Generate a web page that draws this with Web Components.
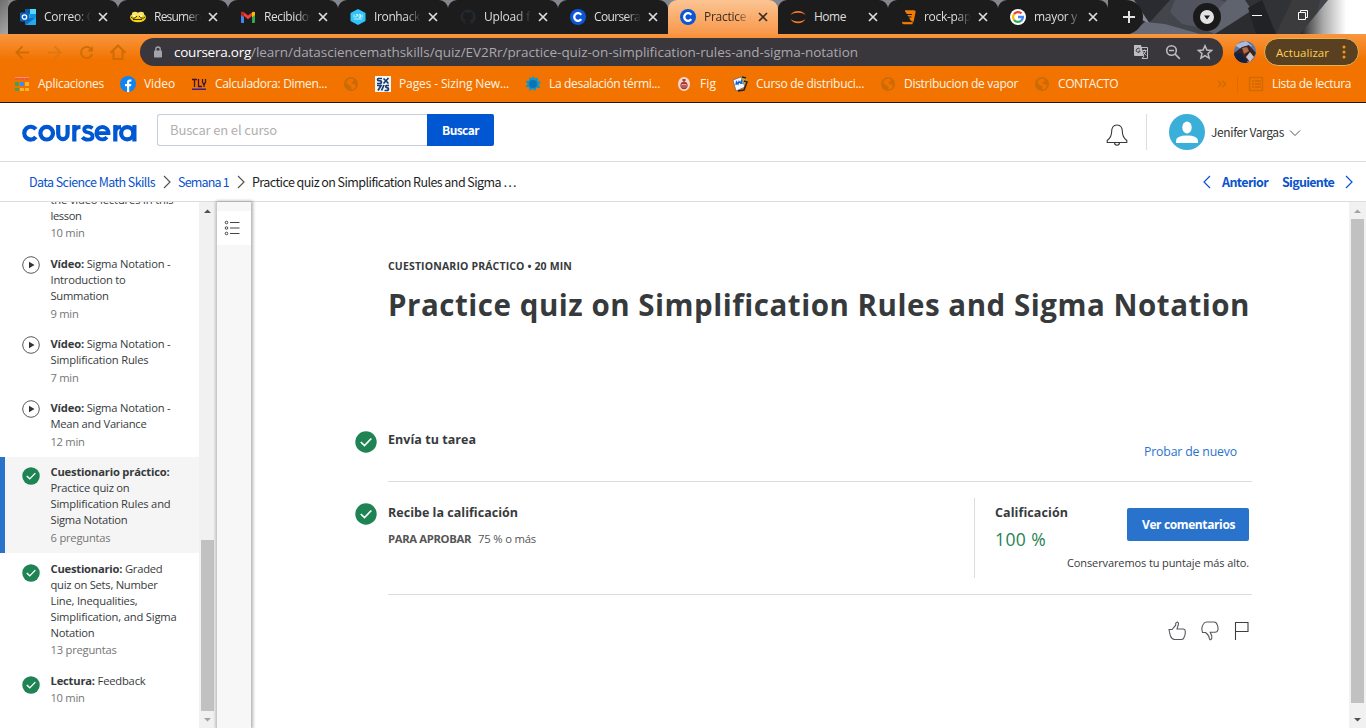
<!DOCTYPE html>
<html lang="es">
<head>
<meta charset="utf-8">
<title>Practice quiz | Coursera</title>
<style>
html,body{margin:0;height:100%;overflow:hidden;background:#fff}
</style>
</head>
<body>
<app-shell></app-shell>
<script>
// Base class: renders the markup returned by view() into an open shadow root.
class Base extends HTMLElement {
  constructor(){ super(); this.attachShadow({mode:'open'}); }
  connectedCallback(){ this.shadowRoot.innerHTML = '<style>*{box-sizing:border-box}:host{display:block;box-sizing:border-box}</style>' + this.view(); }
  a(n){ return this.getAttribute(n) || ''; }
}

// Text run with a given advance width, reached with letter spacing.
class FitText extends HTMLElement {
  constructor(){
    super();
    this.attachShadow({mode:'open'}).innerHTML = '<style>:host{display:block;width:max-content;flex:none;white-space:nowrap}</style><slot></slot>';
  }
  connectedCallback(){
    const w = +this.getAttribute('w');
    if(!w) return;
    const nat = this.getBoundingClientRect().width;
    this.style.letterSpacing = ((w - nat) / this.textContent.length).toFixed(3) + 'px';
  }
}

const globe = '<circle cx="8" cy="8" r="7" fill="#c96b06"/><path d="M3 6 6 3l4-.4L11 5 8.500 6.500 9 8l3 .5 1 2-3 3-2-.5.5-2.500L5.500 9Z" fill="#f27200"/>';
const cLogo = '<circle cx="8" cy="8" r="8" fill="#0b56d6"/><path d="M11.200 5.900A3.800 3.800 0 1 0 11.200 10.100" fill="none" stroke="#fff" stroke-width="2.300"/>';
const ICONS = {
  outlook:[16,16,'<rect x="5" y="0" width="11" height="14" rx="1" fill="#28a8ea"/><path d="M5 0h5v5H5z" fill="#0c59a4"/><path d="M10 0h6v5h-6z" fill="#50d9ff"/><path d="M10 5h6v5h-6z" fill="#1490df"/><path d="M5 9 16 9v6a1 1 0 0 1-1 1H5z" fill="#1172c4"/><path d="M16 8.500 6 16h9a1 1 0 0 0 1-1z" fill="#28a8ea"/><rect y="3.500" width="9" height="9" rx="1" fill="#0a64bd"/><circle cx="4.500" cy="8" r="2.200" fill="none" stroke="#fff" stroke-width="1.300"/>'],
  bee:[16,16,'<ellipse cx="8" cy="8.500" rx="8" ry="4.800" fill="#f6d312"/><ellipse cx="5" cy="5" rx="3" ry="2.200" fill="#fbe66a"/><ellipse cx="11" cy="5" rx="3" ry="2.200" fill="#fbe66a"/><path d="M1 8q3 3 6-1M9 7q3 4 6 1M3 10.500h9" stroke="#38340a" stroke-width="1" fill="none"/><circle cx="4" cy="7" r="1" fill="#fff"/><circle cx="11" cy="7" r="1" fill="#fff"/>'],
  gmail:[16,16,'<path d="M1 3h3v11H1.500Q1 14 1 13z" fill="#4285f4"/><path d="M12 3h3v10q0 1-.6 1H12z" fill="#34a853"/><path d="M1 4.500Q1 2 3.500 3L8 6.600 12.500 3Q15 2 15 4.500L8 10.200Z" fill="#ea4335"/><path d="M12 3.400Q15 1.600 15 4.500V6l-3 2.300z" fill="#fbbc04"/><path d="M1 4.500V6l3 2.300V3.400Q1 1.600 1 4.500" fill="#c5221f"/>'],
  iron:[16,16,'<path d="M8 0 15.500 4V12L8 16 .5 12V4Z" fill="#2dc5fa"/><path d="M4 5.500v3M6 5.500h1.500v1.500H6v1.500M9 5.500h1.500v3H9zM12 8.500v-3M4 10h8" stroke="#d7f4ff" stroke-width=".9" fill="none"/>'],
  github:[16,16,'<path d="M8 .5a7.500 7.500 0 0 0-2.400 14.600v-2.200c-2 .4-2.700-1-3.200-2 1.200.2 1.300 1.300 2.800 1.100.1-.5.300-.8.600-1.100C3.500 10.400 3 8.800 3 7.300c0-.9.300-1.700.8-2.200-.2-.8-.1-1.500.1-2.100 1 0 1.700.5 2.100.8a8 8 0 0 1 4 0c.4-.3 1.200-.8 2.100-.8.300.7.300 1.300.1 2.100.5.600.8 1.300.8 2.200 0 1.500-.6 3.100-2.900 3.600.5.500.6 1 .6 1.800v2.400A7.500 7.500 0 0 0 8 .5Z" fill="#24292e"/>'],
  coursera:[16,16,cLogo],
  jupyter:[16,16,'<path d="M.5 6.200C3 .6 13 .6 15.500 6.200 12 3 4 3 .5 6.200ZM.5 10C4 13.200 12 13.200 15.500 10 13 15.600 3 15.600.5 10Z" fill="#f37726"/>'],
  book:[16,16,'<path d="M5 2h9q1 0 .8 1L13 12q-.2 1-1.200 1H3.500q-.8 0-.6.7T4 14.500h8.500" fill="#f57c00" stroke="#f57c00" stroke-width="1.500"/><path d="M6 5.500h6M5.400 8h6M3 12.600h9.500" stroke="#1c1c1c" stroke-width="1"/>'],
  google:[16,16,'<circle cx="8" cy="8" r="8" fill="#fff"/><g fill="none" stroke-width="2.300"><path d="M4 5.200A5 5 0 0 1 11.500 4.400" stroke="#ea4335"/><path d="M4 5.200A5 5 0 0 0 4 10.800" stroke="#fbbc05"/><path d="M4 10.800A5 5 0 0 0 11.300 11.700" stroke="#34a853"/><path d="M11.300 11.700A5 5 0 0 0 12.900 8H8" stroke="#4285f4"/></g>'],
  x:[10,10,'<path d="M1 1 9 9M9 1 1 9" stroke="currentColor" stroke-width="1.700"/>'],
  plus:[12,12,'<path d="M6 0V12M0 6H12" stroke="#e4e4e4" stroke-width="2"/>'],
  down:[28,28,'<circle cx="14" cy="14" r="14" fill="#1a1a1a"/><circle cx="14" cy="14" r="7" fill="#e3e3e3"/><path d="M11 12.500h6L14 16.500Z" fill="#1a1a1a"/>'],
  min:[12,12,'<path d="M1 6.500H11" stroke="#fff"/>'],
  restore:[12,12,'<path d="M1.500 3.500h7v7h-7zM3.500 3.500v-2h7v7h-2" fill="none" stroke="#fff"/>'],
  back:[16,16,'<path d="M15 8H2M8 1.500 1.500 8 8 14.500" fill="none" stroke="#cf6d05" stroke-width="2"/>'],
  fwd:[16,16,'<path d="M1 8H14M8 1.500 14.500 8 8 14.500" fill="none" stroke="#dc7812" stroke-width="1.800"/>'],
  reload:[16,16,'<path d="M12.700 4A6 6 0 1 0 14 9.500" fill="none" stroke="#cf6d05" stroke-width="2"/><path d="M14.800 1v6h-6z" fill="#cf6d05"/>'],
  home:[16,16,'<path d="M.5 9 8 1.500 15.500 9M3.500 7v8h9V7" fill="none" stroke="#cf6d05" stroke-width="2"/>'],
  lock:[10,12,'<rect x="1" y="4.500" width="8" height="7" rx=".8" fill="#a4a3a7"/><path d="M2.800 5V3.200a2.200 2.200 0 0 1 4.400 0V5" fill="none" stroke="#a4a3a7" stroke-width="1.300"/>'],
  trans:[16,16,'<path d="M1 1h7l3 11H2q-1 0-1-1z" fill="#bdbcc0"/><path d="M7.700 3.500H14.500v11H9l2-2.500" fill="none" stroke="#bdbcc0"/><path d="M6.800 5A2 2 0 1 0 7.200 7H5.500" fill="none" stroke="#39363c"/><path d="M9.500 6.500h4M11.500 5.500v1M13 6.500q-.6 3-3 4.500M10.400 7.500q1 2.500 3 4" fill="none" stroke="#bdbcc0"/>'],
  zoomout:[16,16,'<circle cx="6.500" cy="6.500" r="4.800" fill="none" stroke="#bdbcc0" stroke-width="1.600"/><path d="M4 6.500h5M10 10l4.800 4.800" stroke="#bdbcc0" stroke-width="1.700"/>'],
  star:[16,16,'<path d="M8 1.700 9.900 6l4.700.4-3.600 3.100 1.100 4.600L8 11.700 3.900 14.100 5 9.500 1.400 6.400 6.100 6Z" fill="none" stroke="#bdbcc0" stroke-width="1.500"/>'],
  photo:[22,22,'<defs><clipPath id="c"><circle cx="11" cy="11" r="11"/></clipPath></defs><g clip-path="url(#c)"><path fill="#5d76a8" d="M0 0h22v22H0z"/><path fill="#a9bce0" d="M0 4 12 0l6 5-9 4Z"/><path fill="#3b2420" d="M0 12 8 6l7-2 7 8-5 8H0Z"/><path fill="#b06a4c" d="m8 7 5-1 2 4-5 3Z"/><path fill="#14213f" d="M0 13 7 12 14 22H0Z"/><path fill="#c9c1c5" d="m12 16 4-5 4 5-4 5Z"/></g>'],
  dots:[4,14,'<circle cx="2" cy="2" r="1.500" fill="#f39b13"/><circle cx="2" cy="7" r="1.500" fill="#f39b13"/><circle cx="2" cy="12" r="1.500" fill="#f39b13"/>'],
  apps:[16,16,'<g transform="translate(1 1)"><path d="M0 0h4v3H0zM5 0h4v3H5zM10 0h4v3h-4z" fill="#ee5a3e"/><path d="M0 1h14v-.6H0z" fill="#f9b09a"/><path d="M0 5h4v4H0z" fill="#3ba45a"/><path d="M5 5h4v4H5z" fill="#3c8cf0"/><path d="M10 5h4v4h-4z" fill="#fbb424"/><path d="M0 11h4v3H0z" fill="#3ba45a"/><path d="M5 11h4v3H5zM10 11h4v3h-4z" fill="#fbb424"/></g>'],
  fb:[16,16,'<circle cx="8" cy="8" r="8" fill="#0f85f4"/><path d="M7 16V10.300H5V8h2V6.300Q7 3.300 10 3.400l1.400.1V5.600H10.200Q9.200 5.600 9.200 6.600V8h2.200L11 10.300H9.200V16Z" fill="#fff"/>'],
  tlv:[16,16,'<path d="M1 3.500h5M3.500 3.500V11M7.500 3V10.500H11M11.500 3v3l1 2h1l1-2V3M13 8v3" fill="none" stroke="#3c1330" stroke-width="1.300"/><path d="M1 13.200h14" stroke="#1915a8" stroke-width="1.300"/>'],
  globe:[16,16,globe],
  sx:[16,16,'<path fill="#f4f6f8" d="M0 0h16v16H0z"/><path d="M7 2.500H3.500Q2 3 3 4.500L6 5q1 1.500-.5 2.500H2M8.500 2.500 13.500 7.500M13.500 2 8.500 7.500M2 9.500H6L3 14.500M6.500 14.500 9 9M14 9.500h-2.500q-1.500 1 0 2l1.500.5q1 1.500-.5 2.500H9.500" fill="none" stroke="#17396d" stroke-width="1.700"/>'],
  burst:[16,16,'<path d="m8 0 2 2.500L13 1.500 13 5l3 1-2 2.500L15 12l-3.500-.2L10 15l-2.200-2L4.500 15 4 11.500.5 11 2.500 8 .3 5.300 4 4.500 4.500 1 7 2.500Z" fill="#1694c9"/><circle cx="8" cy="8" r="4" fill="#0c74b4"/>'],
  fig:[16,16,'<ellipse cx="8" cy="8" rx="6" ry="7" fill="#f3d9d0"/><path d="M8 3v3M6.300 4h3.400M5 7.500h6M5.300 10h5.400M6 12h4" stroke="#a8332b" stroke-width="1.300"/><ellipse cx="8" cy="9.500" rx="3.300" ry="3.300" fill="none" stroke="#a8332b"/>'],
  mdoc:[16,16,'<path d="m1 4 8-3 4 10-9 4Z" fill="#f5f7fc" stroke="#35507e" stroke-width=".6"/><path d="m9 1 4 0 2 3-2 6Z" fill="#cba233"/><path d="m10 1 4 1M12 5l3 1-3 8-6 1" stroke="#222" stroke-width="1.500" fill="none"/><path d="m4 9 .5-3 1.500 2 1-2.500 1.500 1.500 1-2 .5 3" stroke="#1461d2" stroke-width="1.400" fill="none"/>'],
  more:[10,8,'<path d="m1 1 3 3-3 3M5.500 1l3 3-3 3" fill="none" stroke="#cb6b04" stroke-width="1.300"/>'],
  list:[16,16,'<rect x="1.500" y="1.500" width="13" height="13" fill="none" stroke="#cb6b04" stroke-width="1.300"/><path d="M4 5h2M7 5h6M4 8h2M7 8h6M4 11h2M7 11h6" stroke="#cb6b04" stroke-width="1.300"/>'],
  bell:[22,24,'<path d="M11 2C7 2 5.600 5 5.600 9c0 5-2.200 6.500-4.400 8.500V19.500H20.800V17.500C18.600 15.500 16.400 14 16.400 9 16.400 5 15 2 11 2ZM8.500 19.500a2.500 2.700 0 0 0 5 0" fill="none" stroke="#373a3c" stroke-width="1.100"/>'],
  user:[36,36,'<circle cx="18" cy="18" r="18" fill="#3bafda"/><ellipse cx="18" cy="13.500" rx="4.700" ry="6" fill="#fff"/><path d="M7 29V27q0-5.500 11-5.500T29 27v2Z" fill="#fff"/>'],
  chevd:[12,8,'<path d="M1 1.500 6 6.500 11 1.500" fill="none" stroke="#555" stroke-width="1"/>'],
  right:[8,14,'<path d="M1 1 7 7 1 13" fill="none" stroke="currentColor" stroke-width="1.200"/>'],
  left:[8,14,'<path d="M7 1 1 7 7 13" fill="none" stroke="currentColor" stroke-width="1.200"/>'],
  play:[18,18,'<circle cx="9" cy="9" r="8.300" fill="#fff" stroke="#555a5e" stroke-width="1"/><path d="M7 5.800 12.500 9 7 12.200Z" fill="#333"/>'],
  check:[22,22,'<circle cx="11" cy="11" r="10.700" fill="#1f8354"/><path d="M5.800 11 9.500 14.500 16.300 7.500" fill="none" stroke="#fff" stroke-width="1.700"/>'],
  menu:[16,16,'<g fill="none" stroke="#444"><circle cx="2.500" cy="2.500" r="1.300"/><circle cx="2.500" cy="8" r="1.300"/><circle cx="2.500" cy="13.500" r="1.300"/><path d="M6 2.500H15.500M6 8H15.500M6 13.500H15.500" stroke-width="1.100"/></g>'],
  up:[18,20,'<path d="M1 8.500H4L7.700 4.200V2.500Q8.200 1 9.300 1 11 1.500 10.200 4L9 8H15.500Q17.500 8.500 17.300 11 17.400 14 16 16.500 15.500 18.500 13.500 18.500H6.500Q3.500 18 2.500 15 1.500 11.500 1 8.500Z" fill="none" stroke="#55585b" stroke-width="1.100"/>'],
  dn:[18,20,'<path d="M1.500 11.500 .8 8Q1 4.500 2.800 2.500 3.800 1 6 1H13Q15.500 1 16.300 4 17.300 6 17 8.500 16.500 11.300 14 11.300H9.200L10.800 15Q11.200 18 9.700 18.700 8.500 19 8.200 17 8.200 14.500 4.500 11.500Z" fill="none" stroke="#55585b" stroke-width="1.100"/>'],
  flag:[16,20,'<path d="M1.500 19V1.500H14V10.500H1.500" fill="none" stroke="#3c4043" stroke-width="1.100"/>'],
};

class UiIcon extends Base {
  view(){
    const [w,h,d] = ICONS[this.a('name')];
    const s = +this.a('size') || w;
    return `<style>:host{flex:none;width:${s}px}svg{display:block}</style><svg width="${s}" height="${h*s/w}" viewBox="0 0 ${w} ${h}">${d}</svg>`;
  }
}

class BrowserTab extends Base {
  view(){
    return `<style>
    :host{width:110px;height:34px;flex:none;position:relative;background:#1c1c1c;border-radius:9px 9px 0 0;color:#dedede;display:flex;align-items:center;padding-left:12px;font:12px/16px "Open Sans",sans-serif}
    :host([active]){background:linear-gradient(#fbc493,#f8984a);color:#3d2c20}
    :host([sep])::after{content:"";position:absolute;right:-1px;top:8px;width:1px;height:19px;background:#5c5c5c}
    .t{width:47px;overflow:hidden;margin-left:8px;-webkit-mask-image:linear-gradient(90deg,#000 68%,transparent);mask-image:linear-gradient(90deg,#000 68%,transparent)}
    :host([full]) .t{-webkit-mask-image:none;mask-image:none}
    .x{margin-left:7px}
    </style><ui-icon name="${this.a('icon')}"></ui-icon><div class="t"><fit-text w="${this.a('w')}">${this.a('label')}</fit-text></div><ui-icon class="x" name="x"></ui-icon>`;
  }
}

class TabStrip extends Base {
  view(){
    const tabs = [['outlook','Correo: C',50,'sep'],['bee','Resumen',47,'sep'],['gmail','Recibidos',50,'sep'],['iron','Ironhack',46,'sep'],['github','Upload f',46,'sep'],['coursera','Coursera',46,''],['coursera','Practice q',52,'active'],['jupyter','Home',32,'full sep'],['book','rock-pap',47,'sep'],['google','mayor y',43,'']];
    return `<style>
    :host{height:34px;display:flex;position:relative;background:#777b83;overflow:hidden}
    .bg{position:absolute;inset:0}
    .run{position:relative;display:flex;margin-left:8px;background:linear-gradient(#83868c 0 7px,#1c1c1c 9px);border-radius:0 0 15px 0;height:34px}
    .run browser-tab[active]{background-clip:padding-box}
    .plus{width:35px;height:28px;margin-top:3px;background:#1c1c1c;border-radius:0 14px 14px 0;display:flex;align-items:center;padding-left:7px;position:relative}
    .ctl{position:relative;flex:1;display:flex;align-items:center}
    .l{background:#1c1c1c;height:34px;display:flex;padding-right:0}
    </style>
    <svg class="bg" width="1366" height="34">
      <defs><linearGradient id="w"><stop offset="0" stop-color="#222"/><stop offset=".35" stop-color="#aaa"/><stop offset=".7" stop-color="#fff"/></linearGradient>
      <linearGradient id="s" x2="1" y2="1"><stop offset="0" stop-color="#6e6e6e"/><stop offset=".6" stop-color="#a5a5a5"/><stop offset="1" stop-color="#222"/></linearGradient></defs>
      <path d="M0 0h30v34H0z" fill="url(#s)"/>
      <path d="M1090 0h276v34h-276z" fill="#43454c"/><path d="M1120 0h50l-18 20-18 14h-40z" fill="#2a2b30"/>
      <path d="M1120 0h14l16 24-8-4z" fill="#888b94"/>
      <path d="M1145 22 1165 24 1200 34h-70z" fill="#666a76"/><path d="m1175 0 45 0 25 10-15 24-48-10-12-12Z" fill="#51545e"/>
      <path d="M1227 0h50l-28 12-34 22-14-6Z" fill="#5f636d"/><path d="m1215 34 38-24 24 24Z" fill="#2b2c2f"/>
      <path d="M1245 0h50l-15 34h-12Z" fill="#303236"/><path d="M1248 8 1262 0 1276 34h-20Z" fill="#212225"/>
      <path d="M1276 34 1292 0h28l-8 34Z" fill="#3b3b3d"/><path d="M1300 34 1328 0h38v34Z" fill="url(#w)"/>
    </svg>
    <div class="run">${tabs.map(t=>`<browser-tab icon="${t[0]}" label="${t[1]}" w="${t[2]}" ${t[3]}></browser-tab>`).join('')}<div class="l" style="width:10px;background:#1c1c1c"></div></div>
    <div class="plus" style="width:25px;height:34px;margin-top:0;border-radius:0 17px 17px 0;padding-left:0;justify-content:flex-start"><ui-icon name="plus" style="margin-left:5px"></ui-icon></div>
    <div class="ctl"><ui-icon name="down" style="margin-left:50px"></ui-icon><ui-icon name="min" style="margin:-5px 0 0 30px"></ui-icon><ui-icon name="restore" style="margin:-5px 0 0 34px"></ui-icon></div>`;
  }
}

class ToolBar extends Base {
  view(){
    return `<style>
    :host{height:36px;display:flex;align-items:center;padding-left:6px;font-family:"Open Sans",sans-serif}
    .b{width:32px;height:32px;display:grid;place-items:center}
    .url{width:1083px;height:28px;margin-left:6px;border-radius:14px;background:#39363c;display:flex;align-items:center;padding:0 10px 0 13px;color:#a9a8ac;font-size:13.500px;line-height:20px}
    .url b{color:#fff;font-weight:400}
    .r{margin-left:auto;display:flex;gap:16px}
    .up{margin-left:8px;width:95px;height:28px;border-radius:14px;border:1px solid #e5b350;background:#594020;color:#fbcf58;display:flex;align-items:center;padding:0 12px 0 11px;justify-content:space-between;font-size:11.500px}
    </style>
    <div class="b"><ui-icon name="back" size="15"></ui-icon></div><div class="b"><ui-icon name="fwd" size="15"></ui-icon></div><div class="b"><ui-icon name="reload" size="15"></ui-icon></div><div class="b"><ui-icon name="home"></ui-icon></div>
    <div class="url"><ui-icon name="lock"></ui-icon><fit-text w="77" style="margin-left:11px;color:#fff">coursera.org</fit-text><fit-text w="607">/learn/datasciencemathskills/quiz/EV2Rr/practice-quiz-on-simplification-rules-and-sigma-notation</fit-text><div class="r"><ui-icon name="trans"></ui-icon><ui-icon name="zoomout"></ui-icon><ui-icon name="star"></ui-icon></div></div>
    <ui-icon name="photo" style="margin-left:11px"></ui-icon>
    <div class="up"><fit-text w="53">Actualizar</fit-text><ui-icon name="dots"></ui-icon></div>`;
  }
}

class BookmarksBar extends Base {
  view(){
    const b = [['apps','Aplicaciones',66],['fb','Video',31],['tlv','Calculadora: Dimen...',112],['globe'],['sx','Pages - Sizing New...',110],['burst','La desalación térmi...',111],['fig','Fig',16],['mdoc','Curso de distribuci...',108],['globe','Distribucion de vapor',114],['globe','CONTACTO',60]];
    const item = t=>`<div class="i"><ui-icon name="${t[0]}"></ui-icon>${t[1]?`<fit-text w="${t[2]}">${t[1]}</fit-text>`:''}</div>`;
    return `<style>
    :host{height:32px;display:flex;align-items:center;padding:0 15px 4px 14px;gap:16px;font:12px/18px "Open Sans",sans-serif;color:#fff3e4}
    .i{display:flex;align-items:center;gap:8px;flex:none}
    .m{margin-left:auto}.s{width:1px;height:17px;background:#e06b05;margin:0 -6px}
    </style>${b.map(item).join('')}<ui-icon class="m" name="more"></ui-icon><span class="s"></span>${item(['list','Lista de lectura',79])}`;
  }
}

class CourseHeader extends Base {
  view(){
    return `<style>
    :host{height:59px;border-bottom:1px solid #ddd;display:flex;align-items:flex-start;padding:11px 0 0 22px;font-family:"Noto Sans CJK SC",sans-serif}
    .logo{width:115px;height:22px;margin:8px 20px 0 0;display:block}
    .in{width:270px;height:32px;border:1px solid #c7cfdb;border-right:0;border-radius:3px 0 0 3px;padding:0 0 0 12px;font-size:13px;line-height:30px;color:#b0b0b0}
    .btn{width:67px;height:32px;background:#0156d1;color:#fff;border-radius:0 2px 2px 0;font-size:12px;font-weight:700;line-height:31px;padding-left:15px}
    .bell{margin:9px 0 0 612px}
    .v{width:1px;height:36px;background:#ddd;margin:0 22px 0 18px}
    .n{font-size:12px;line-height:18px;margin:9px 5px 0 6px;color:#333}
    .c{margin-top:15px}
    </style>
    <svg class="logo" viewBox="0 0 115 22" fill="none" stroke="#0156d1" stroke-width="4.200">
      <path d="M13.800 7.300A6.400 6.400 0 1 0 13.800 15"/><circle cx="24.700" cy="11.200" r="6.300"/>
      <path d="M36.200 3V11.800a4.700 5.300 0 0 0 9.400 0V3M52.300 19.500V3M52.300 10Q52.500 5 58.500 5"/>
      <path d="M70.500 6.300Q68.500 4.600 66 4.600 62.200 4.600 62.200 7.400 62.200 9.800 66.200 10.500 70.600 11.300 70.600 14.200 70.600 17.600 66 17.600 62.300 17.600 60.300 15.200" stroke-width="3.800"/>
      <path d="M75 11.200H86.500A6.100 6.200 0 1 0 85 15.300" stroke-width="3.800"/><path d="M93.300 19.500V3M93.300 10Q93.500 5 99 5"/><circle cx="105.200" cy="11.200" r="6.100"/><path d="M112.400 3V19.500"/>
    </svg>
    <div class="in"><fit-text w="107">Buscar en el curso</fit-text></div><div class="btn"><fit-text w="37">Buscar</fit-text></div>
    <ui-icon class="bell" name="bell"></ui-icon><span class="v"></span><ui-icon name="user"></ui-icon><fit-text class="n" w="73">Jenifer Vargas</fit-text><ui-icon class="c" name="chevd"></ui-icon>`;
  }
}

class CourseCrumbs extends Base {
  view(){
    return `<style>
    :host{height:40px;border-bottom:1px solid #ddd;display:flex;align-items:center;padding:0 13px 0 29px;font:12.500px/18px "Noto Sans CJK SC",sans-serif;color:#0a53cb}
    .k{color:#555;margin:0 7px 0 8px}.p{color:#1f1f1f}
    .b{font-weight:700}.l{margin-left:auto}
    </style>
    <fit-text w="126">Data Science Math Skills</fit-text><ui-icon class="k" name="right"></ui-icon><fit-text w="51">Semana 1</fit-text><ui-icon class="k" name="right"></ui-icon><fit-text class="p" w="264">Practice quiz on Simplification Rules and Sigma …</fit-text>
    <ui-icon class="l" name="left"></ui-icon><fit-text class="b" w="46" style="margin:0 14px 0 11px">Anterior</fit-text><fit-text class="b" w="52" style="margin-right:11px">Siguiente</fit-text><ui-icon name="right"></ui-icon>`;
  }
}

class LessonItem extends Base {
  view(){
    return `<style>
    :host{display:flex;padding:7px 0 8px 22px;font:11.200px/16px "Open Sans",sans-serif;color:#373a3c}
    :host([active]){background:#f5f5f5;border-left:5px solid #2a73cc;padding:7px 0 7px 17px;margin-bottom:1px}
    :host([video]),:host([late]){padding-bottom:7px}
    .m{color:#757575;margin-top:1px}
    :host([video]) .m,:host([active]) .m{margin-top:2px}
    :host([late]) {padding-bottom:8px}
    .ic{width:28.500px;padding-top:3px}:host([video]) .ic{padding-top:0}
    </style><div class="ic">${this.a('icon')?`<ui-icon name="${this.a('icon')}" size="18"></ui-icon>`:''}</div><div><slot></slot><fit-text class="m" w="${this.a('mw')}">${this.a('meta')}</fit-text></div>`;
  }
}

class ScrollBar extends Base {
  view(){
    const c = (n)=>this.a(n)||'#a3a3a3';
    return `<style>
    :host{width:17px;background:#f1f1f1;display:flex;flex-direction:column;align-items:center;flex:none}
    .t{width:13px;height:${this.a('h')}px;margin-top:${this.a('top')}px;background:#c1c1c1}
    svg{flex:none;display:block}.d{margin-top:auto}
    </style><svg width="17" height="17"><path d="M5 11 8.500 7.500 12 11Z" fill="${c('uc')}"/></svg><div class="t"></div><svg class="d" width="17" height="17"><path d="M5 7 8.500 10.500 12 7Z" fill="${c('dc')}"/></svg>`;
  }
}

class LessonList extends Base {
  view(){
    const L = (w,t)=>`<fit-text w="${w}">${t}</fit-text>`;
    return `<style>:host{width:199px;overflow:hidden;flex:none}.w{margin-top:-17px}b{font-weight:700}</style><div class="w">
    <lesson-item meta="10 min" mw="34">${L(123,'the video lectures in this')}${L(31,'lesson')}</lesson-item>
    <lesson-item video icon="play" meta="9 min" mw="28">${L(120,'<b>Vídeo:</b> Sigma Notation -')}${L(75,'Introduction to')}${L(58,'Summation')}</lesson-item>
    <lesson-item video icon="play" meta="7 min" mw="28">${L(120,'<b>Vídeo:</b> Sigma Notation -')}${L(98,'Simplification Rules')}</lesson-item>
    <lesson-item video icon="play" meta="12 min" mw="34">${L(120,'<b>Vídeo:</b> Sigma Notation -')}${L(96,'Mean and Variance')}</lesson-item>
    <lesson-item active icon="check" meta="6 preguntas" mw="60">${L(119,'<b>Cuestionario práctico:</b>')}${L(79,'Practice quiz on')}${L(120,'Simplification Rules and')}${L(77,'Sigma Notation')}</lesson-item>
    <lesson-item late icon="check" meta="13 preguntas" mw="66">${L(112,'<b>Cuestionario:</b> Graded')}${L(107,'quiz on Sets, Number')}${L(87,'Line, Inequalities,')}${L(126,'Simplification, and Sigma')}${L(44,'Notation')}</lesson-item>
    <lesson-item late icon="check" meta="10 min" mw="34">${L(95,'<b>Lectura:</b> Feedback')}</lesson-item></div>`;
  }
}

class SideRail extends Base {
  view(){
    return `<style>:host{width:35px;flex:none;background:#f7f7f7;border-left:1px solid #c9c9c9;padding-top:9px;box-shadow:1px 0 3px 1px rgba(0,0,0,.3)}
    div{height:34px;background:#fff;display:flex;align-items:center;padding-left:7px}</style><div><ui-icon name="menu"></ui-icon></div>`;
  }
}

class QuizPage extends Base {
  view(){
    return `<style>
    :host{flex:1;min-width:0;padding:56px 97px 0 104px;font:13px/18px "Open Sans",sans-serif;color:#373a3c}
    .k{font-size:10.500px;line-height:16px;font-weight:700;margin-left:33px}
    h1{font-size:29.500px;line-height:40px;font-weight:700;margin:11px 0 0 33px;height:40px}
    .row{display:grid;grid-template-columns:33px 1fr}
    .one{margin-top:106px;height:51px}
    .body{border-bottom:1px solid #ddd;display:flex;justify-content:space-between}
    .h{font-weight:700;font-size:12.500px}
    .two{height:113px}
    .two .body{padding-top:16px}
    .ln{display:flex;gap:7px;font-size:11.300px;line-height:16px;margin-top:9px;color:#555}
    .g{height:80px;width:278px;border-left:1px solid #ddd;padding:6px 3px 0 20px;display:grid;grid-template-columns:auto auto;justify-content:space-between;align-content:start}
    .g .s{font-size:17.500px;line-height:24px;margin-top:5px;color:#1f8354}
    .btn{margin-top:4px;width:122px;height:33px;border-radius:2px;background:#2a73cc;color:#fff;font-weight:700;font-size:12px;line-height:33px;padding-left:15px}
    .n{font-size:11px;line-height:16px;grid-column:1/3;justify-self:end;margin-top:4px;color:#373a3c}
    .a{color:#2a73cc;font-size:12.300px;margin:12px 15px 0 0}
    .ic{display:flex;justify-content:flex-end;gap:15px;padding:26px 2px 0 0}
    .wht{padding-top:3px}
    </style>
    <fit-text class="k" w="184">CUESTIONARIO PRÁCTICO • 20 MIN</fit-text>
    <h1><fit-text w="862">Practice quiz on Simplification Rules and Sigma Notation</fit-text></h1>
    <div class="row one"><ui-icon name="check" style="padding-top:0"></ui-icon><div class="body"><fit-text class="h" w="88">Envía tu tarea</fit-text><fit-text class="a" w="93">Probar de nuevo</fit-text></div></div>
    <div class="row two"><ui-icon name="check" style="margin-top:21px"></ui-icon><div class="body"><div style="padding-top:6px"><fit-text class="h" w="130">Recibe la calificación</fit-text><div class="ln"><fit-text w="83" style="font-weight:700">PARA APROBAR</fit-text><fit-text w="58">75 % o más</fit-text></div></div>
    <div class="g"><div><fit-text class="h" w="73">Calificación</fit-text><fit-text class="s" w="51">100 %</fit-text></div><div class="btn"><fit-text w="93">Ver comentarios</fit-text></div><fit-text class="n" w="182">Conservaremos tu puntaje más alto.</fit-text></div></div></div>
    <div class="ic"><ui-icon name="up"></ui-icon><ui-icon name="dn"></ui-icon><ui-icon name="flag"></ui-icon></div>`;
  }
}

class AppShell extends Base {
  view(){
    return `<style>
    :host{width:1366px;height:728px;display:flex;flex-direction:column;overflow:hidden;background:#fff}
    :host>*{flex:none}
    .chrome{height:69px;background:linear-gradient(#f9963f,#f27300 26px);border-bottom:1px solid #191919}
    main{display:flex;height:526px}
    </style>
    <tab-strip></tab-strip><div class="chrome"><tool-bar></tool-bar><bookmarks-bar></bookmarks-bar></div>
    <course-header></course-header><course-crumbs></course-crumbs>
    <main><lesson-list></lesson-list><scroll-bar uc="#505050" top="321" h="172"></scroll-bar><side-rail></side-rail><quiz-page></quiz-page><scroll-bar dc="#505050" top="0" h="484"></scroll-bar></main>`;
  }
}

const defs = {'fit-text':FitText,'ui-icon':UiIcon,'browser-tab':BrowserTab,'tab-strip':TabStrip,'tool-bar':ToolBar,'bookmarks-bar':BookmarksBar,'course-header':CourseHeader,'course-crumbs':CourseCrumbs,'lesson-item':LessonItem,'scroll-bar':ScrollBar,'lesson-list':LessonList,'side-rail':SideRail,'quiz-page':QuizPage,'app-shell':AppShell};
for (const [n,c] of Object.entries(defs)) customElements.define(n,c);
</script>
</body>
</html>
